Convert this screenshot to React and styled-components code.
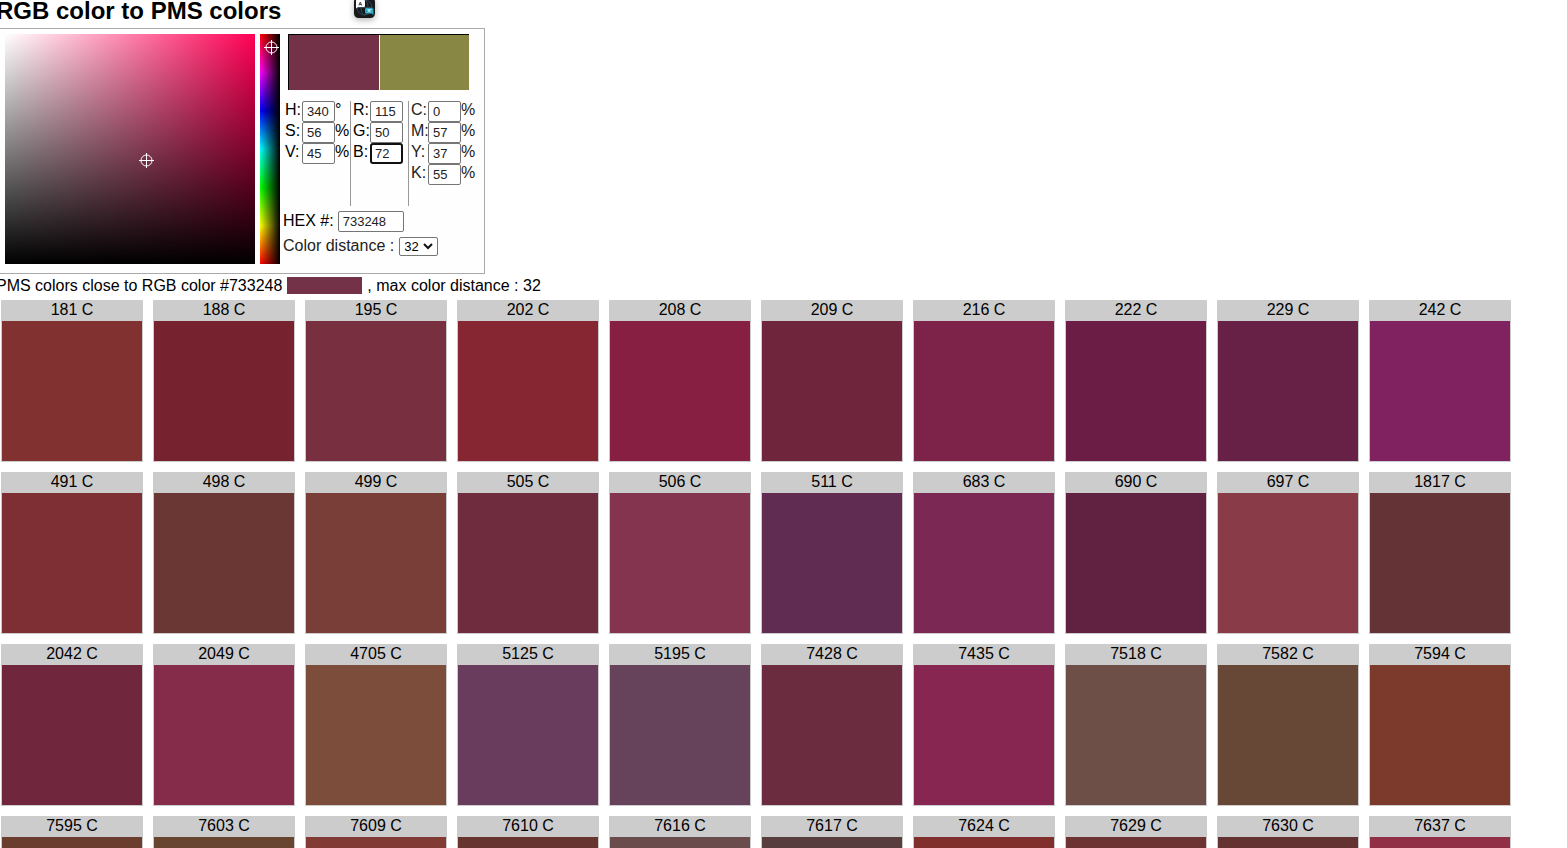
import React, { useState } from "react";
import styled, { createGlobalStyle } from "styled-components";

const Global = createGlobalStyle`
  *, *::before, *::after { box-sizing: border-box; }
  body {
    margin: 0;
    background: #fff;
    color: #000;
    font: 16px/18px "Liberation Sans", Arial, sans-serif;
  }
`;

const Page = styled.main`
  position: relative;
  height: 100vh;
  overflow: hidden;
`;

const Content = styled.div`
  margin-left: -4px;
`;

const Title = styled.h1`
  margin: 0;
  height: 28px;
  font-size: 24px;
  line-height: 22px;
`;

const Panel = styled.section`
  display: flex;
  width: 489px;
  height: 246px;
  padding: 5px 0 5px 8px;
  border: 1px solid #aaa;
  background: #fefefe;
`;

const Plane = styled.div`
  position: relative;
  flex: none;
  width: 250px;
  height: 230px;
  background:
    linear-gradient(to bottom, transparent, #000),
    linear-gradient(to right, #fff, #ff0055);
`;

const HueBar = styled.div`
  position: relative;
  flex: none;
  width: 20px;
  height: 230px;
  margin-left: 5px;
  background:
    linear-gradient(to right, transparent, #000),
    linear-gradient(to bottom, #f00, #f0f, #00f, #0ff, #0f0, #ff0, #f00);
`;

const Marker = styled.svg`
  position: absolute;
  left: ${(p) => p.$x}px;
  top: ${(p) => p.$y}px;
  width: 15px;
  height: 15px;
  fill: none;
  stroke: #fff;
`;

const Controls = styled.div`
  flex: 1;
  display: flex;
  flex-direction: column;
  align-items: flex-start;
  padding-left: 3px;
`;

const Preview = styled.div`
  display: flex;
  gap: 1px;
  width: 181px;
  height: 56px;
  margin: 0 0 11px 5px;
  border: solid #000;
  border-width: 1px 0 0 1px;
`;

const PreviewColor = styled.div`
  flex: 1;
  background: ${(p) => p.$color};
`;

const Channels = styled.div`
  display: flex;
  height: 105px;
`;

const ChannelGroup = styled.div`
  padding-left: 2px;
  width: ${(p) => p.$width}px;
  border-right: ${(p) => (p.$last ? "0" : "1px solid #999")};
  color: ${(p) => (p.$last ? "#222" : "#000")};
`;

const Channel = styled.label`
  display: flex;
  height: 21px;
`;

const ChannelName = styled.span`
  flex: none;
  width: 17px;
  white-space: nowrap;
`;

const TextBox = styled.input`
  flex: none;
  width: ${(p) => p.$width}px;
  height: 21px;
  padding: 0 ${(p) => (p.$active ? 3 : 4)}px;
  border: ${(p) => (p.$active ? "2px solid #101010" : "1px solid #767676")};
  border-radius: ${(p) => (p.$active ? 3 : 2)}px;
  outline: none;
  background: #fff;
  color: #222;
  font: 13px "Liberation Sans", Arial, sans-serif;
`;

const Field = styled.label`
  display: flex;
  gap: ${(p) => p.$gap}px;
  height: 21px;
  line-height: 20px;
  color: ${(p) => p.$color};
`;

const Fields = styled.div`
  display: flex;
  flex-direction: column;
  gap: 4px;
  margin-top: 5px;
`;

const SelectWrap = styled.span`
  position: relative;
  display: flex;
  align-self: center;
`;

const Select = styled.select`
  appearance: none;
  width: 39px;
  height: 19px;
  padding: 0 4px;
  border: 1px solid #767676;
  border-radius: 2px;
  background: #fff;
  color: #000;
  font: 13px "Liberation Sans", Arial, sans-serif;
`;

const Chevron = styled.svg`
  position: absolute;
  right: 5px;
  top: 6px;
  width: 10px;
  height: 7px;
  fill: none;
  stroke: #111;
  stroke-width: 2;
  pointer-events: none;
`;

const Summary = styled.p`
  display: flex;
  height: 18px;
  margin: 3px 0 5px;
  white-space: pre;
`;

const SummaryColor = styled.span`
  width: 75px;
  height: 17px;
  margin: 0 5px;
  background: ${(p) => p.$color};
`;

const Grid = styled.ul`
  display: grid;
  grid-template-columns: repeat(auto-fill, 142px);
  gap: 10px;
  margin: 0;
  padding: 0 0 0 5px;
  list-style: none;
`;

const Swatch = styled.li`
  height: 162px;
  padding: 0 1px 1px;
  display: flex;
  flex-direction: column;
  background: #ccc;
  text-align: center;
`;

const SwatchName = styled.span`
  height: 21px;
  line-height: 20px;
`;

const SwatchColor = styled.div`
  flex: 1;
  background: ${(p) => p.$color};
`;

const TranslateBadge = styled.svg`
  position: absolute;
  left: 354px;
  top: -3px;
  width: 21px;
  height: 21px;
  overflow: visible;
  filter: drop-shadow(0 2px 3px rgba(0, 0, 0, 0.3));
`;

const groups = [
  { width: 68, rows: [["H", 340, "°"], ["S", 56, "%"], ["V", 45, "%"]] },
  { width: 58, rows: [["R", 115, ""], ["G", 50, ""], ["B", 72, ""]] },
  { width: 68, last: true, rows: [["C", 0, "%"], ["M", 57, "%"], ["Y", 37, "%"], ["K", 55, "%"]] },
];

const swatches = [
  ["181 C", "#81312f"], ["188 C", "#76232f"], ["195 C", "#782f40"], ["202 C", "#862633"], ["208 C", "#861f41"],
  ["209 C", "#6f263d"], ["216 C", "#7d2248"], ["222 C", "#6c1d45"], ["229 C", "#672146"], ["242 C", "#80225f"],
  ["491 C", "#7d2f34"], ["498 C", "#6a3735"], ["499 C", "#7a3e39"], ["505 C", "#6f2c3f"], ["506 C", "#84344e"],
  ["511 C", "#612c51"], ["683 C", "#7c2855"], ["690 C", "#612141"], ["697 C", "#893b47"], ["1817 C", "#643335"],
  ["2042 C", "#70273d"], ["2049 C", "#862c4b"], ["4705 C", "#7c4d3a"], ["5125 C", "#693c5e"], ["5195 C", "#66435a"],
  ["7428 C", "#6a2c3e"], ["7435 C", "#872651"], ["7518 C", "#6d4f47"], ["7582 C", "#674736"], ["7594 C", "#7c3a2d"],
  ["7595 C", "#6b3d2e"], ["7603 C", "#684530"], ["7609 C", "#823b34"], ["7610 C", "#673430"], ["7616 C", "#6b4c4c"],
  ["7617 C", "#583d3e"], ["7624 C", "#802f2d"], ["7629 C", "#6d3332"], ["7630 C", "#633231"], ["7637 C", "#912f46"],
];

function Crosshair({ x, y }) {
  return (
    <Marker $x={x} $y={y} viewBox="0 0 15 15" aria-hidden="true">
      <circle cx="7.5" cy="7.5" r="5.5" />
      <path d="M7.5 0v15M0 7.5h15" />
    </Marker>
  );
}

export default function App() {
  const [distance, setDistance] = useState("32");
  return (
    <Page>
      <Global />
      <Content>
        <Title>RGB color to PMS colors</Title>
        <Panel>
          <Plane>
            <Crosshair x={134} y={119} />
          </Plane>
          <HueBar>
            <Crosshair x={4} y={6} />
          </HueBar>
          <Controls>
            <Preview>
              <PreviewColor $color="#733248" />
              <PreviewColor $color="#888844" />
            </Preview>
            <Channels>
              {groups.map((g) => (
                <ChannelGroup key={g.rows[0][0]} $width={g.width} $last={g.last}>
                  {g.rows.map(([name, value, unit]) => (
                    <Channel key={name}>
                      <ChannelName>{name}:</ChannelName>
                      <TextBox $width={33} $active={name === "B"} defaultValue={value} />
                      {unit}
                    </Channel>
                  ))}
                </ChannelGroup>
              ))}
            </Channels>
            <Fields>
              <Field $gap={4} $color="#000">
                HEX #: <TextBox $width={66} defaultValue="733248" />
              </Field>
              <Field $gap={5} $color="#222">
                Color distance :
                <SelectWrap>
                  <Select value={distance} onChange={(e) => setDistance(e.target.value)}>
                    <option>16</option>
                    <option>32</option>
                    <option>64</option>
                  </Select>
                  <Chevron viewBox="0 0 10 7" aria-hidden="true">
                    <path d="M1 1l4 4 4-4" />
                  </Chevron>
                </SelectWrap>
              </Field>
            </Fields>
          </Controls>
        </Panel>
        <Summary>
          PMS colors close to RGB color #733248
          <SummaryColor $color="#733248" />
          , max color distance : {distance}
        </Summary>
        <Grid>
          {swatches.map(([name, color]) => (
            <Swatch key={name}>
              <SwatchName>{name}</SwatchName>
              <SwatchColor $color={color} />
            </Swatch>
          ))}
        </Grid>
      </Content>
      <TranslateBadge viewBox="0 0 21 21" role="img" aria-label="Translate">
        <rect width="21" height="21" rx="4.5" fill="#17191b" />
        <g fill="none" stroke="#2f4a55" strokeWidth="1">
          <circle cx="10.5" cy="10.5" r="7.5" />
          <ellipse cx="10.5" cy="10.5" rx="3.5" ry="7.5" />
          <path d="M3 10.5h15" />
        </g>
        <path d="M2 3h8a1 1 0 0 1 1 1v5a1 1 0 0 1-1 1H4l-2 1.5z" fill="#fff" />
        <path d="M4.8 8.5l1.5-3.5 1.5 3.5M5.3 7.5h2" stroke="#444" fill="none" />
        <path d="M12 11h6a1.5 1.5 0 0 1 1.5 1.5V18l-2-1.5H12a1 1 0 0 1-1-1V12a1 1 0 0 1 1-1z" fill="#28a9c4" />
        <path d="M13 12.8h4.5M15.2 12v1M13.5 15.5l3-2.5M14 13l3 2.5" stroke="#d6f5fa" strokeWidth=".8" fill="none" />
      </TranslateBadge>
    </Page>
  );
}
